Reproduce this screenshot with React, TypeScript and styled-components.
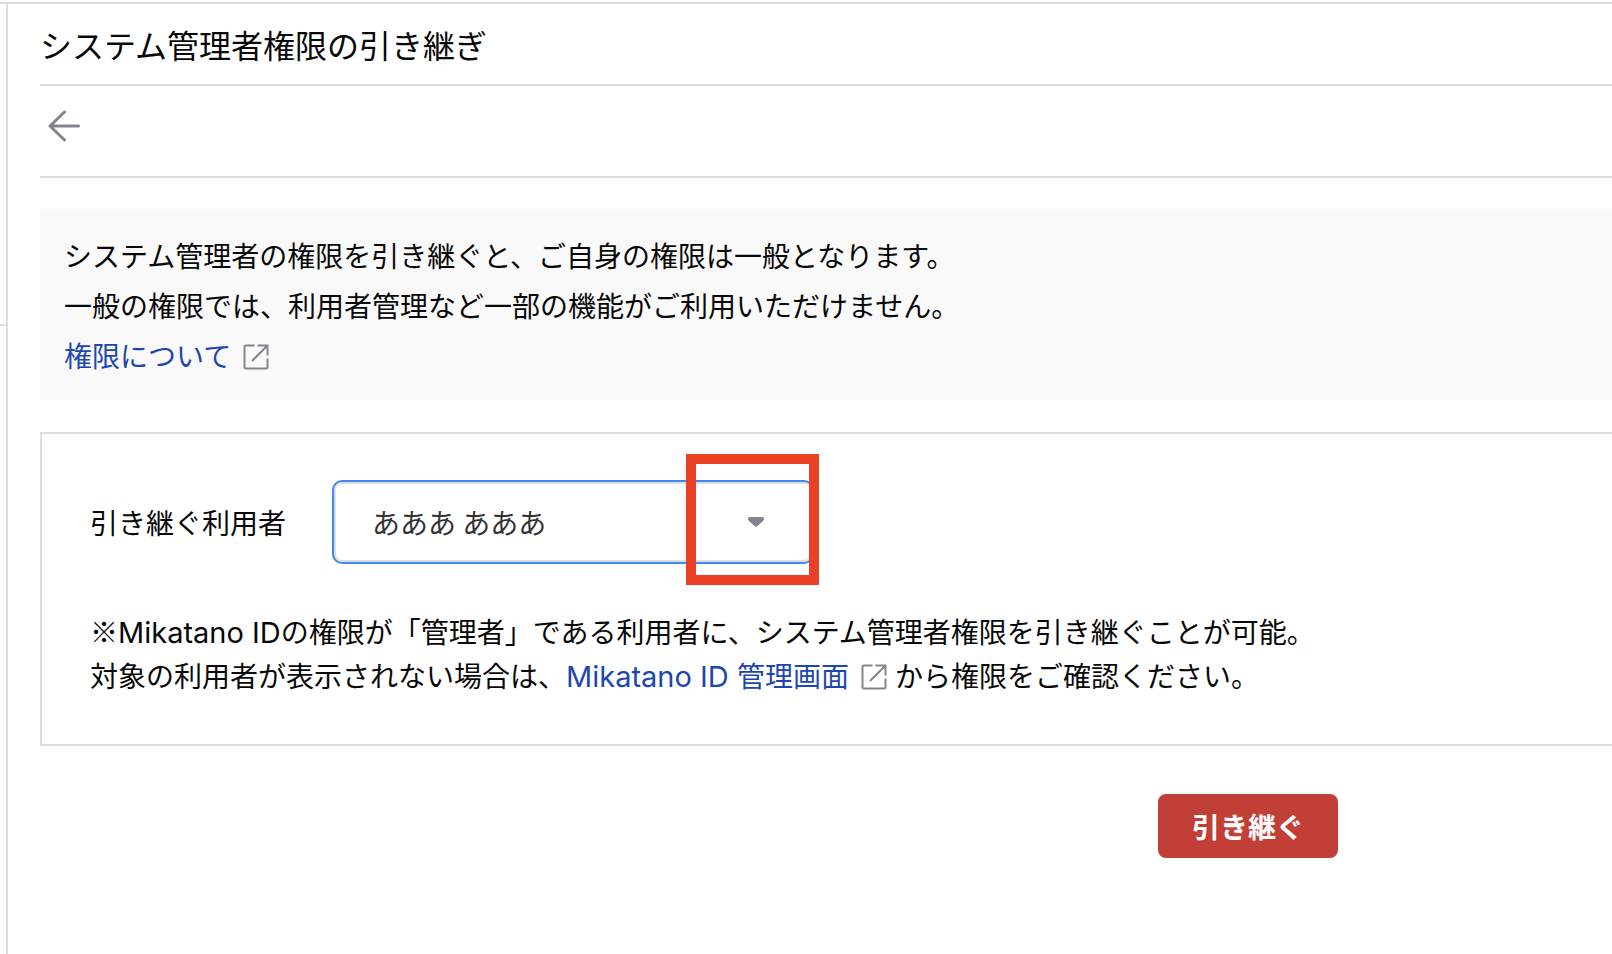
import React from "react";
import styled, { createGlobalStyle } from "styled-components";

const line = "#dadfdf";
const icon = "#82858f";
const linkColor = "#1d46af";

const GlobalStyle = createGlobalStyle`
  *, *::before, *::after { box-sizing: border-box; }
  body {
    margin: 0;
    background: #fff;
    color: #080808;
    font-family: "Noto Sans CJK JP", sans-serif;
    font-size: 28px;
    overflow-x: hidden;
  }
`;

const Page = styled.div`
  display: flex;
  min-height: 100vh;
  padding-top: 2px;
`;

const Sidebar = styled.aside`
  flex: none;
  width: 8px;
  border-top: 2px solid ${line};
  border-right: 2px solid ${line};
`;

const SidebarItem = styled.div`
  height: 322px;
  border-bottom: 2px solid ${line};
`;

const Main = styled.main`
  flex: 1;
  min-width: 0;
  padding-left: 32px;
  border-top: 2px solid ${line};
`;

const Title = styled.h1`
  margin: 0;
  height: 82px;
  border-bottom: 2px solid ${line};
  font-size: 32px;
  font-weight: 400;
  line-height: 80px;
`;

const Toolbar = styled.div`
  display: flex;
  align-items: flex-start;
  height: 92px;
  padding-top: 16px;
  border-bottom: 2px solid ${line};
`;

const BackButton = styled.button`
  display: flex;
  padding: 0;
  border: 0;
  background: none;
  color: ${icon};
  cursor: pointer;
`;

const Notice = styled.section`
  margin-top: 32px;
  padding: 20px 24px;
  background: #f9f9f9;
  line-height: 50px;
`;

const Text = styled.p`
  margin: 0;
`;

const Latin = styled.span`
  font-family: Inter, sans-serif;
  font-size: 29px;
`;

const Link = styled.a`
  color: ${linkColor};
  text-decoration: none;
`;

const LinkIcon = styled.svg`
  width: 26px;
  height: 26px;
  margin: 0 8px 0 12px;
  vertical-align: -3px;
  color: ${icon};
`;

const Panel = styled.form`
  margin-top: 32px;
  padding: 46px 48px;
  border: 2px solid ${line};
  border-right: 0;
`;

const Field = styled.div`
  display: flex;
  align-items: center;
  gap: 46px;
`;

const SelectBox = styled.div`
  position: relative;
  width: 482px;
`;

const Select = styled.select`
  display: block;
  width: 100%;
  height: 84px;
  padding: 0 80px 0 38px;
  appearance: none;
  border: 2px solid #4285f4;
  border-radius: 10px;
  outline: 0;
  background: #fff;
  box-shadow: inset 0 0 0 2px ${line};
  color: #333;
  font: inherit;
`;

const Caret = styled.svg`
  position: absolute;
  top: 36px;
  right: 50px;
  width: 16px;
  height: 12px;
  color: ${icon};
  pointer-events: none;
`;

const Highlight = styled.div`
  position: absolute;
  top: -26px;
  right: -5px;
  width: 133px;
  height: 131px;
  border: 10px solid #ea4025;
  pointer-events: none;
`;

const Note = styled.div`
  margin-top: 46px;
  line-height: 42px;
`;

const Actions = styled.div`
  display: flex;
  justify-content: flex-end;
  padding: 48px 274px 48px 0;
`;

const SubmitButton = styled.button`
  height: 64px;
  padding: 0 34px;
  border: 0;
  border-radius: 8px;
  background: #c23f38;
  color: #fff;
  font: inherit;
  font-weight: 700;
  cursor: pointer;
`;

const ExternalIcon = () => (
  <LinkIcon viewBox="0 0 26 26" fill="none" stroke="currentColor" strokeWidth="2" aria-hidden="true">
    <path d="M11.500 1.500H3Q1.500 1.500 1.500 3V23Q1.500 24.500 3 24.500H23Q24.500 24.500 24.500 23V14.500" />
    <path d="M14.500 1.500H24.500V11.500M24.500 1.500L9 17" />
  </LinkIcon>
);

export default function App() {
  return (
    <>
      <GlobalStyle />
      <Page>
        <Sidebar>
          <SidebarItem />
        </Sidebar>
        <Main>
          <Title>システム管理者権限の引き継ぎ</Title>
          <Toolbar>
            <BackButton type="button" aria-label="戻る">
              <svg width="48" height="48" viewBox="0 0 48 48" fill="none" stroke="currentColor" strokeWidth="3" strokeLinecap="round" strokeLinejoin="round">
                <path d="M38.500 24H10M24.500 10L10 24L24.500 38" />
              </svg>
            </BackButton>
          </Toolbar>
          <Notice>
            <Text>システム管理者の権限を引き継ぐと、ご自身の権限は一般となります。</Text>
            <Text>一般の権限では、利用者管理など一部の機能がご利用いただけません。</Text>
            <Text>
              <Link href="#permissions">権限について<ExternalIcon /></Link>
            </Text>
          </Notice>
          <Panel onSubmit={(e) => e.preventDefault()}>
            <Field>
              <label htmlFor="successor">引き継ぐ利用者</label>
              <SelectBox>
                <Select id="successor">
                  <option>あああ あああ</option>
                </Select>
                <Caret viewBox="0 0 16 12" aria-hidden="true">
                  <path fill="currentColor" d="M1.500 1H14.500Q16 1 16 2.500Q16 4 15 5L9.500 10Q8 11.500 6.500 10L1 5Q0 4 0 2.500Q0 1 1.500 1Z" />
                </Caret>
                <Highlight />
              </SelectBox>
            </Field>
            <Note>
              <Text>
                ※<Latin>Mikatano ID</Latin>の権限が「管理者」である利用者に、システム管理者権限を引き継ぐことが可能。
              </Text>
              <Text>
                対象の利用者が表示されない場合は、<Link href="#mikatano-id"><Latin>Mikatano ID </Latin>管理画面<ExternalIcon /></Link>から権限をご確認ください。
              </Text>
            </Note>
            
          </Panel>
          <Actions>
            <SubmitButton type="submit">引き継ぐ</SubmitButton>
          </Actions>
        </Main>
      </Page>
    </>
  );
}
